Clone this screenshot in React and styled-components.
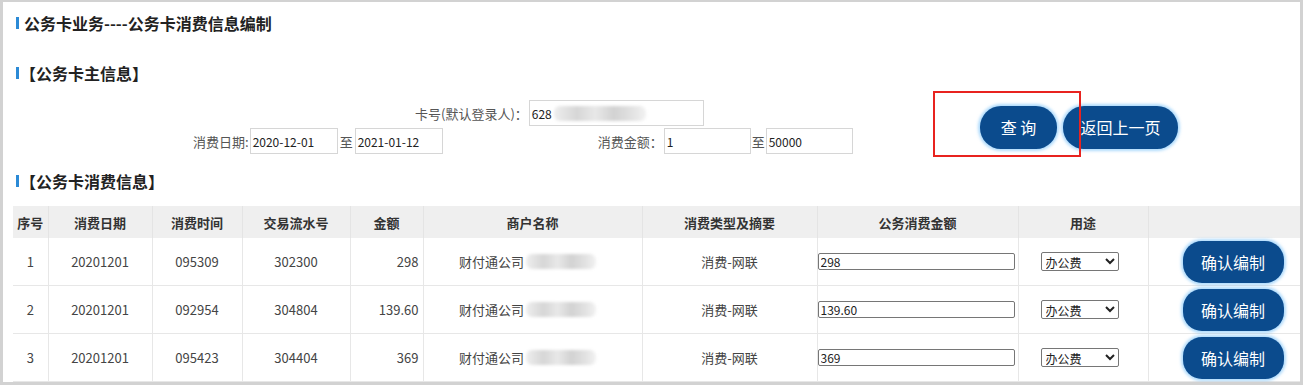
import React from 'react'
import styled, { createGlobalStyle } from 'styled-components'

const GlobalStyle = createGlobalStyle`
    body {
        margin: 0;
        background: #fff;
        font-family: "Noto Sans CJK SC", "Microsoft YaHei", sans-serif;
    }
`

const rows = [
    { no: 1, date: '20201201', time: '095309', serial: '302300', amount: '298' },
    { no: 2, date: '20201201', time: '092954', serial: '304804', amount: '139.60' },
    { no: 3, date: '20201201', time: '095423', serial: '304404', amount: '369' },
]

const columns = [
    { title: '序号', width: 35 },
    { title: '消费日期', width: 104 },
    { title: '消费时间', width: 90 },
    { title: '交易流水号', width: 108 },
    { title: '金额', width: 73 },
    { title: '商户名称', width: 219 },
    { title: '消费类型及摘要', width: 175 },
    { title: '公务消费金额', width: 201 },
    { title: '用途', width: 130 },
    { title: '', width: 152 },
]

const App = () => {
    return (
        <>
            <GlobalStyle />
            <Frame>
                <Heading>公务卡业务----公务卡消费信息编制</Heading>
                <SectionHeading $space={17}>【公务卡主信息】</SectionHeading>

                <SearchArea>
                    <FormBlock>
                        <FormRow $indent={402}>
                            <Label>卡号(默认登录人)：</Label>
                            <TextBox $width={175}>
                                628<Blur $width={92} />
                            </TextBox>
                        </FormRow>
                        <FormRow $indent={180}>
                            <Label>消费日期:</Label>
                            <TextBox $width={88}>2020-12-01</TextBox>
                            <To>至</To>
                            <TextBox $width={88}>2021-01-12</TextBox>
                            <Label $gap={155}>消费金额：</Label>
                            <TextBox $width={87}>1</TextBox>
                            <To $tight>至</To>
                            <TextBox $width={87}>50000</TextBox>
                        </FormRow>
                    </FormBlock>
                    <ButtonGroup>
                        <RoundButton $width={77}>查 询</RoundButton>
                        <RoundButton $width={115}>返回上一页</RoundButton>
                    </ButtonGroup>
                    <Marker />
                </SearchArea>

                <SectionHeading $space={15}>【公务卡消费信息】</SectionHeading>

                <Table>
                    <colgroup>
                        {columns.map((c, i) => <col key={i} style={{ width: c.width }} />)}
                    </colgroup>
                    <thead>
                        <tr>
                            {columns.map((c, i) => <Th key={i}>{c.title}</Th>)}
                        </tr>
                    </thead>
                    <tbody>
                        {rows.map((r) => (
                            <tr key={r.no}>
                                <Td>{r.no}</Td>
                                <Td>{r.date}</Td>
                                <Td>{r.time}</Td>
                                <Td>{r.serial}</Td>
                                <Td $align="right">{r.amount}</Td>
                                <Td>
                                    <Merchant>财付通公司<Blur $width={70} /></Merchant>
                                </Td>
                                <Td>消费-网联</Td>
                                <Td>
                                    <EditInput defaultValue={r.amount} />
                                </Td>
                                <Td>
                                    <UseSelect defaultValue="办公费">
                                        <option>办公费</option>
                                        <option>差旅费</option>
                                        <option>招待费</option>
                                    </UseSelect>
                                </Td>
                                <Td>
                                    <EditButton>确认编制</EditButton>
                                </Td>
                            </tr>
                        ))}
                    </tbody>
                </Table>
            </Frame>
        </>
    );
}

export default App


const Frame = styled.div`
    box-sizing: border-box;
    width: 1303px;
    height: 385px;
    overflow: hidden;
    border: 3px solid #d2d2d2;
    border-top-width: 2px;
    padding: 11px 0 0 10px;
    color: #333;
`

const Heading = styled.div`
    display: flex;
    align-items: center;
    height: 20px;
    margin-left: 3px;
    margin-bottom: 30px;
    font-size: 16px;
    font-weight: bold;
    color: #222;

    &::before {
        content: "";
        width: 3px;
        height: 12px;
        margin-right: 5px;
        background: #2b8ad6;
    }
`

const SectionHeading = styled(Heading)`
    margin-bottom: ${p => p.$space}px;

    &::before {
        margin-right: 1px;
    }
`

const SearchArea = styled.div`
    position: relative;
    display: flex;
    align-items: center;
    margin-bottom: 17px;
`

const FormBlock = styled.div`
    display: flex;
    flex-direction: column;
    gap: 2px;
    width: 967px;
`

const FormRow = styled.div`
    display: flex;
    align-items: center;
    padding-left: ${p => p.$indent}px;
    height: 26px;
`

const Label = styled.span`
    margin-left: ${p => p.$gap || 0}px;
    margin-right: 1px;
    font-size: 13px;
    color: #555;
    white-space: nowrap;
`

const To = styled.span`
    margin: 0 ${p => p.$tight ? 1 : 2}px;
    font-size: 13px;
    color: #555;
`

const TextBox = styled.div`
    box-sizing: border-box;
    display: flex;
    align-items: center;
    width: ${p => p.$width}px;
    height: 26px;
    padding: 0 2px;
    border: 1px solid #d6d6d6;
    font-size: 12px;
    color: #222;
`

const Blur = styled.span`
    display: inline-block;
    width: ${p => p.$width}px;
    height: 15px;
    margin-left: 2px;
    border-radius: 6px;
    background: linear-gradient(90deg, #eeeeee 0%, #d6d6d6 25%, #e8e8e8 45%, #d2d2d2 65%, #e2e2e2 85%, #f2f2f2 100%);
    filter: blur(1.5px);
    vertical-align: middle;
`

const ButtonGroup = styled.div`
    display: flex;
    gap: 6px;
`

const RoundButton = styled.button`
    width: ${p => p.$width}px;
    height: 43px;
    padding: 0;
    border: none;
    border-radius: 21px;
    background: #0b4b8d;
    color: #fff;
    font-family: inherit;
    font-size: 16px;
    box-shadow: 0 0 3px 2px rgba(110, 190, 250, 0.55);
    white-space: pre;

    &:focus {
        outline: none;
    }
`

const Marker = styled.div`
    position: absolute;
    left: 920px;
    top: -9px;
    width: 148px;
    height: 66px;
    box-sizing: border-box;
    border: 2px solid #e8231f;
    pointer-events: none;
`

const Table = styled.table`
    table-layout: fixed;
    border-collapse: collapse;
    width: 1287px;
    font-size: 13px;
`

const Th = styled.th`
    height: 32px;
    padding: 0;
    background: #efefef;
    border-left: 1px solid #e4e4e4;
    font-weight: bold;
    color: #333;
    white-space: nowrap;

    &:first-child {
        border-left: none;
    }
`

const Td = styled.td`
    height: 47px;
    padding: 0 4px;
    text-align: ${p => p.$align || 'center'};
    border: 1px solid #e7e7e7;
    border-top: none;
    color: #444;

    &:first-child {
        border-left: none;
    }
`

const Merchant = styled.span`
    display: inline-flex;
    align-items: center;
    margin-left: -10px;
`

const EditInput = styled.input`
    box-sizing: border-box;
    display: block;
    width: 197px;
    height: 17px;
    margin-left: -4px;
    padding: 0 2px;
    border: 1px solid #767676;
    border-radius: 2px;
    font-family: inherit;
    font-size: 12px;
    color: #222;
`

const UseSelect = styled.select`
    display: block;
    width: 78px;
    height: 19px;
    margin-left: 18px;
    padding: 0;
    border: 1px solid #767676;
    border-radius: 2px;
    background: #fff;
    font-family: inherit;
    font-size: 12px;
    color: #222;
`

const EditButton = styled.button`
    width: 101px;
    height: 42px;
    margin-left: 18px;
    padding: 0;
    border: none;
    border-radius: 19px;
    background: #0b4b8d;
    color: #fff;
    font-family: inherit;
    font-size: 16px;
    box-shadow: 0 0 3px 2px rgba(110, 190, 250, 0.55);
`
